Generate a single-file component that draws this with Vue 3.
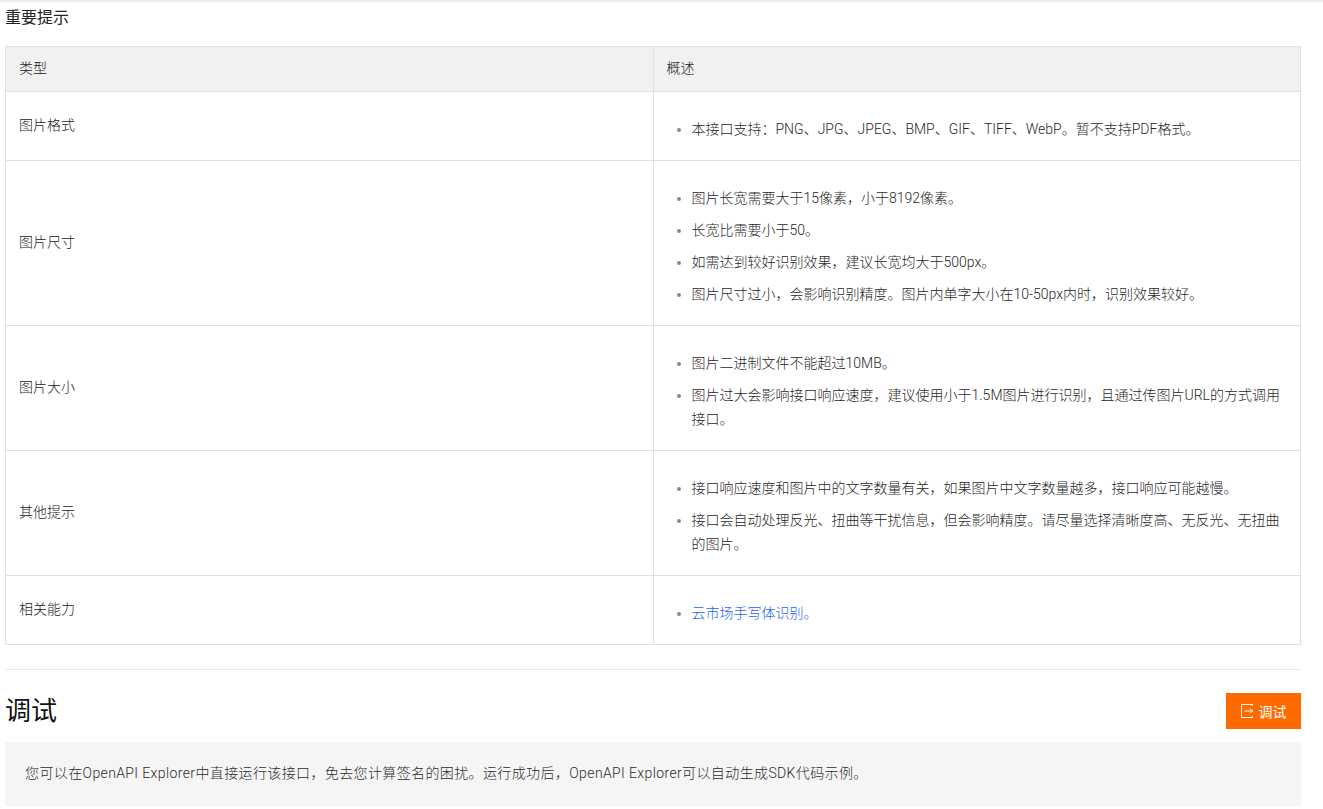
<template>
  <div class="page">
    <h4 class="notice-title">重要提示</h4>
    <table class="notice-table">
      <colgroup>
        <col class="half" />
        <col class="half" />
      </colgroup>
      <thead>
        <tr>
          <th>类型</th>
          <th>概述</th>
        </tr>
      </thead>
      <tbody>
        <tr v-for="row in rows" :key="row.type">
          <td class="type-cell">{{ row.type }}</td>
          <td>
            <ul>
              <li v-for="item in row.items" :key="item">
                <a v-if="row.link" href="#" class="link">{{ item }}</a>
                <span v-else class="item-text">{{ item }}</span>
              </li>
            </ul>
          </td>
        </tr>
      </tbody>
    </table>

    <div class="divider"></div>

    <div class="debug-head">
      <h2>调试</h2>
      <button class="debug-button">
        <svg width="12" height="14" viewBox="0 0 12 14" fill="none" stroke="#fff" stroke-width="1">
          <path d="M11.5 2V.5H.5v13h11V12" />
          <path d="M3.5 7H12M9 4.5 11.5 7 9 9.5" />
        </svg>
        调试
      </button>
    </div>

    <div class="debug-tip">
      您可以在OpenAPI Explorer中直接运行该接口，免去您计算签名的困扰。运行成功后，OpenAPI Explorer可以自动生成SDK代码示例。
    </div>
  </div>
</template>

<script setup>
const rows = [
  {
    type: '图片格式',
    items: ['本接口支持：PNG、JPG、JPEG、BMP、GIF、TIFF、WebP。暂不支持PDF格式。'],
  },
  {
    type: '图片尺寸',
    items: [
      '图片长宽需要大于15像素，小于8192像素。',
      '长宽比需要小于50。',
      '如需达到较好识别效果，建议长宽均大于500px。',
      '图片尺寸过小，会影响识别精度。图片内单字大小在10-50px内时，识别效果较好。',
    ],
  },
  {
    type: '图片大小',
    items: [
      '图片二进制文件不能超过10MB。',
      '图片过大会影响接口响应速度，建议使用小于1.5M图片进行识别，且通过传图片URL的方式调用接口。',
    ],
  },
  {
    type: '其他提示',
    items: [
      '接口响应速度和图片中的文字数量有关，如果图片中文字数量越多，接口响应可能越慢。',
      '接口会自动处理反光、扭曲等干扰信息，但会影响精度。请尽量选择清晰度高、无反光、无扭曲的图片。',
    ],
  },
  {
    type: '相关能力',
    link: true,
    items: ['云市场手写体识别。'],
  },
]
</script>

<style scoped>
.page {
  box-sizing: border-box;
  width: 1323px;
  height: 809px;
  padding: 0 22px 0 5px;
  border-top: 2px solid #eee;
  font-family: Roboto, "Noto Sans CJK SC", sans-serif;
  font-size: 14px;
  line-height: 24px;
  color: #333;
}

.notice-title {
  margin: 4px 0 16px;
  font-size: 16px;
  line-height: 24px;
  font-weight: 400;
  color: #222;
}

.notice-table {
  width: 1296px;
  border-collapse: collapse;
  table-layout: fixed;
}

.half {
  width: 50%;
}

th,
td {
  border: 1px solid #e0e0e0;
  padding: 12px 13px;
  text-align: left;
  font-weight: 400;
  vertical-align: middle;
}

th {
  padding: 9px 13px 11px;
  background: #f1f1f1;
}

.type-cell {
  padding-bottom: 15px;
}

th,
.type-cell {
  font-weight: 300;
  color: #222;
}

ul {
  margin: 13px 0 7px;
  padding: 0 0 0 25px;
  color: #888;
}

li + li {
  margin-top: 8px;
}

li {
  padding-right: 5px;
}

.item-text {
  color: #1f1f1f;
  font-weight: 300;
}

.link {
  color: #2a62f0;
  font-weight: 300;
  text-decoration: none;
}

.divider {
  height: 1px;
  background: #e8e8e8;
  margin-top: 24px;
}

.debug-head {
  display: flex;
  justify-content: space-between;
  align-items: center;
  margin-top: 23px;
}

h2 {
  margin: 0;
  font-size: 26px;
  line-height: 36px;
  font-weight: 400;
  color: #111;
}

.debug-button {
  display: flex;
  align-items: center;
  justify-content: center;
  gap: 6px;
  width: 75px;
  height: 36px;
  padding: 0;
  border: none;
  background: #ff6a00;
  color: #fff;
  font-family: inherit;
  font-size: 14px;
}

.debug-tip {
  margin-top: 13px;
  height: 64px;
  padding: 19px 20px;
  box-sizing: border-box;
  background: #f5f5f5;
  color: #2b2b2b;
  font-weight: 300;
  letter-spacing: 0.38px;
}
</style>

<style>
html,
body {
  margin: 0;
  overflow: hidden;
  background: #fff;
}
</style>
